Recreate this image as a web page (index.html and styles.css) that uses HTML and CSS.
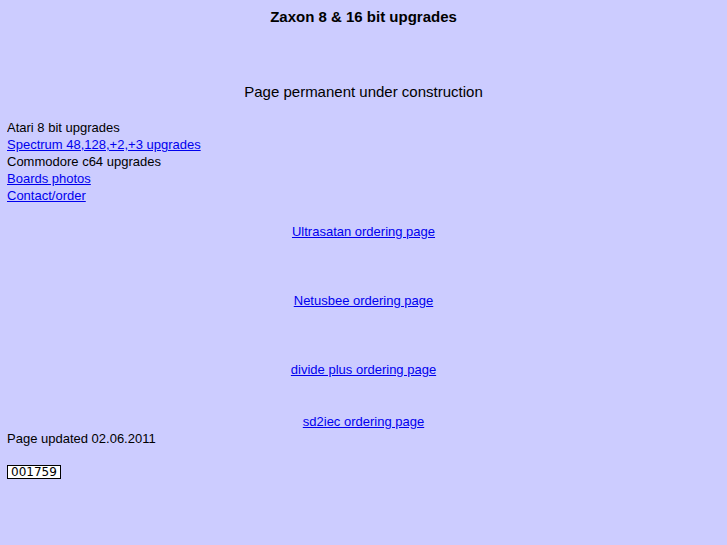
FILE: index.html
```html
<!DOCTYPE html>
<html>
<head>
  <meta charset="UTF-8">
  <title>Zaxon 8 &amp; 16 bit upgrades</title>
  <link rel="stylesheet" href="styles.css">
</head>
<body>
  <div class="title">Zaxon 8 &amp; 16 bit upgrades</div>

  <div class="notice">Page permanent under construction</div>

  <div class="menu">
    <div>Atari 8 bit upgrades</div>
    <div><a href="#">Spectrum 48,128,+2,+3 upgrades</a></div>
    <div>Commodore c64 upgrades</div>
    <div><a href="#">Boards photos</a></div>
    <div><a href="#">Contact/order</a></div>
  </div>

  <div class="order first"><a href="#">Ultrasatan ordering page</a></div>
  <div class="order far"><a href="#">Netusbee ordering page</a></div>
  <div class="order far"><a href="#">divide plus ordering page</a></div>
  <div class="order near"><a href="#">sd2iec ordering page</a></div>

  <div class="updated">Page updated 02.06.2011</div>

  <div class="counter">001759</div>
</body>
</html>
```

FILE: styles.css
```css
body { margin: 8px 7px; background: #ccccff; color: #000; font-family: "Liberation Sans", Arial, sans-serif; font-size: 13px; line-height: 17px; }
a { color: #0000ee; }
.title { text-align: center; font-weight: bold; font-size: 15px; }
.notice { text-align: center; font-size: 15px; line-height: 18px; margin-top: 58px; }
.menu { margin-top: 18px; }
.order { text-align: center; }
.order.first { margin-top: 19px; }
.order.far { margin-top: 52px; }
.order.near { margin-top: 35px; }
.counter { display: inline-block; margin-top: 18px; border: 1px solid #000; background: #fff; font-family: "DejaVu Sans", sans-serif; font-size: 12px; line-height: 12px; padding: 0 3px; }
```
